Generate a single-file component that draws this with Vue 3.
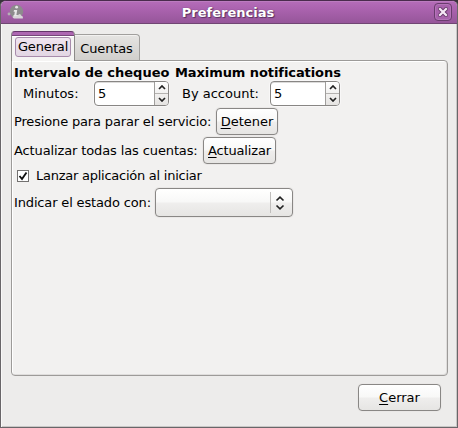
<script setup>
import { ref } from 'vue'

const minutes = ref(5)
const perAccount = ref(5)
const launch = ref(true)
</script>

<template>
  <div class="screen">
    <div class="window">
      <header class="titlebar">
        <svg class="app-icon" width="18" height="18" viewBox="0 0 18 18">
          <circle cx="9.500" cy="7.500" r="6.700" fill="#8d8b8d" />
          <circle cx="2" cy="10" r="1.400" fill="#b5b1b5" />
          <path d="M7 6h3.200l-.8 5h2v2H6.500v-2h.8l.5-3.300H6.600z" fill="#e8e7e8" />
          <circle cx="9.600" cy="3.200" r="1.400" fill="#e8e7e8" />
          <path d="M5.500 12.500l4-.5 3-2q1.500 0 1.500 1.500q2.500.5 1.800 3H7q-1.500-.5-1.500-2z" fill="#d8d5d8" />
        </svg>
        <h1 class="title">Preferencias</h1>
        <button class="close" aria-label="Cerrar ventana">
          <svg width="10" height="10" viewBox="0 0 10 10">
            <path d="M2 2l6 6M8 2l-6 6" stroke="#6a3a6d" stroke-width="4" stroke-linecap="square" />
            <path d="M2 2l6 6M8 2l-6 6" stroke="#f5e8f6" stroke-width="2.200" stroke-linecap="square" />
          </svg>
        </button>
      </header>

      <nav class="tabs">
        <button class="tab active"><span class="focus"><span class="t general">General</span></span></button>
        <button class="tab"><span class="t cuentas">Cuentas</span></button>
      </nav>

      <main class="panel">
        <div class="row heads">
          <b class="head h1">Intervalo de chequeo</b>
          <b class="head h2">Maximum notifications</b>
        </div>
        <div class="row spins">
          <span class="t minutos">Minutos:</span>
          <div class="spin first">
            <span class="value">{{ minutes }}</span>
            <div class="steps">
              <span class="step"><svg width="8" height="5" viewBox="0 0 8 5"><path d="M1 4l3-3 3 3" /></svg></span>
              <span class="step down"><svg width="8" height="5" viewBox="0 0 8 5"><path d="M1 1l3 3 3-3" /></svg></span>
            </div>
          </div>
          <span class="t account">By account:</span>
          <div class="spin second">
            <span class="value">{{ perAccount }}</span>
            <div class="steps">
              <span class="step"><svg width="8" height="5" viewBox="0 0 8 5"><path d="M1 4l3-3 3 3" /></svg></span>
              <span class="step down"><svg width="8" height="5" viewBox="0 0 8 5"><path d="M1 1l3 3 3-3" /></svg></span>
            </div>
          </div>
        </div>
        <div class="row stop">
          <span class="t presione">Presione para parar el servicio:</span>
          <button class="btn detener"><span class="t"><u>D</u>etener</span></button>
        </div>
        <div class="row update">
          <span class="t todas">Actualizar todas las cuentas:</span>
          <button class="btn actualizar"><span class="t"><u>A</u>ctualizar</span></button>
        </div>
        <div class="row check" @click="launch = !launch">
          <span class="box">
            <svg v-if="launch" width="10" height="10" viewBox="0 0 10 10"><path d="M1.500 5l2.500 3L8.500 1.500" /></svg>
          </span>
          <span class="t lanzar">Lanzar aplicación al iniciar</span>
        </div>
        <div class="row state">
          <span class="t indicar">Indicar el estado con:</span>
          <div class="combo">
            <span class="arrows">
              <svg width="10" height="14" viewBox="0 0 10 14"><path d="M1.500 4.500L5 1.200l3.500 3.300M1.500 9.500L5 12.800l3.500-3.300" /></svg>
            </span>
          </div>
        </div>
      </main>

      <footer class="footer">
        <button class="btn cerrar"><span class="t"><u>C</u>errar</span></button>
      </footer>
    </div>
  </div>
</template>

<style>
body { margin: 0; }
</style>

<style scoped>
* { box-sizing: border-box; }
button { font: inherit; color: inherit; padding: 0; margin: 0; }
.screen { width: 458px; height: 428px; background: #38333a; font: 13px/16px "DejaVu Sans", sans-serif; color: #000; overflow: hidden; }
.window {
  width: 458px; height: 428px; display: flex; flex-direction: column; overflow: hidden;
  border: 1px solid #696669; border-top-color: #4a2b4d; border-radius: 6px 6px 0 0; background: #edeceb;
  box-shadow: inset 1px 0 #f9f8f8, inset -1px -1px #c9c7c6;
}
.titlebar {
  height: 23px; flex: none; display: flex; align-items: center; padding: 0 5px 0 6px;
  background: linear-gradient(#b56db9, #ab63af 35%, #96569a);
  border-bottom: 1px solid #704673; box-shadow: inset 0 1px #bc7cc0;
}
.app-icon { flex: none; margin-top: 1px; }
.title {
  flex: 1; margin: 1px 3px 0 0; text-align: center; font-size: 13px; line-height: 16px; color: #fff;
  text-shadow: 1px 1px 1px #593160, 0 0 1px #593160; white-space: nowrap;
}
.close {
  width: 18px; height: 18px; display: flex; align-items: center; justify-content: center;
  border: 1px solid #693c6d; border-radius: 4px; background: #a862ac; box-shadow: inset 0 0 0 1px #b574b9;
}
.tabs { height: 36px; flex: none; display: flex; align-items: flex-end; padding-left: 10px; }
.tab {
  width: 65px; height: 26px; border: 1px solid #a19f9d; border-left: 0; border-bottom: 0;
  border-radius: 0 4px 0 0; background: linear-gradient(#e5e4e2, #d1cfcc); box-shadow: inset 0 1px #f2f1f0;
  display: flex; justify-content: center; align-items: center; padding-top: 3px;
}
.tab.active {
  width: 64px; height: 30px; margin-bottom: -1px; position: relative; z-index: 1; align-items: flex-start;
  border: 1px solid #8c8a88; border-top-color: #65346a; border-bottom: 0; border-radius: 4px 4px 0 0;
  background: linear-gradient(#ae67b2 0 3px, #764779 3px 4px, #fff 4px 5px, #f5f4f3 5px);
  padding-top: 5px; box-shadow: none;
}
.focus {
  width: 56px; height: 20px; display: flex; justify-content: center; align-items: center;
  border: 1px solid #a78bab; border-radius: 3px; background: linear-gradient(#f0e4f0, #e2d6e3);
}
.general { letter-spacing: -0.15px; }
.cuentas { letter-spacing: -0.15px; margin-right: 1px; }
.panel {
  width: 437px; height: 316px; flex: none; margin-left: 10px; padding-left: 2px;
  border: 1px solid #9d9b99; border-radius: 0 4px 4px 4px; background: #f2f1f0;
  box-shadow: inset 1px 1px #fff, inset -1px -1px #dfdddc;
}
.row { display: flex; align-items: center; }
.t, .head { white-space: nowrap; }
.head { flex: none; }
.heads { height: 20px; padding-top: 3px; }
.h1 { width: 161px; }
.h2 { letter-spacing: -0.08px; }
.spins { height: 26px; }
.minutos { width: 80px; padding-left: 9px; }
.account { width: 101px; padding-left: 13px; }
.spin {
  align-self: flex-start;
  width: 75px; height: 25px; display: flex; border: 1px solid #888684; border-radius: 4px;
  background: #fff; box-shadow: 0 0 0 1px #f8f7f7, inset 0 1px #dcdbda; overflow: hidden;
}
.second { width: 70px; }
.value { flex: 1; padding: 4px 0 0 3px; }
.steps { width: 14px; border-left: 1px solid #a09e9c; display: flex; flex-direction: column; background: linear-gradient(#fff, #e5e3e1); }
.step { flex: 1; display: flex; align-items: center; justify-content: center; }
.down { border-top: 1px solid #b4b2b0; }
svg { display: block; }
.step path, .arrows path { fill: none; stroke: #222; stroke-width: 1.700; }
.stop { height: 27px; margin-top: 1px; }
.update { height: 27px; margin-top: 2px; }
.presione { width: 202px; letter-spacing: -0.16px; }
.todas { width: 189px; letter-spacing: -0.12px; }
.btn {
  height: 27px; display: flex; justify-content: center; align-items: center; border: 1px solid #898785;
  border-radius: 4px; background: linear-gradient(#fff, #f8f8f7 48%, #efeeed 52%, #e6e5e3);
  box-shadow: 0 0 0 1px #eae8e7;
}
.detener { width: 62px; }
.actualizar { width: 73px; }
.actualizar .t { letter-spacing: -0.15px; }
.cerrar { width: 83px; }
u { text-decoration-thickness: 1px; text-underline-offset: 2px; }
.check { height: 24px; padding-left: 3px; gap: 7px; }
.lanzar { letter-spacing: -0.25px; }
.box { width: 12px; height: 12px; border: 1px solid #737170; background: #fff; }
.box path { fill: none; stroke: #111; stroke-width: 1.900; }
.indicar { width: 141px; letter-spacing: -0.15px; }
.combo {
  width: 138px; height: 29px; display: flex; justify-content: flex-end; align-items: center;
  border: 1px solid #898785; border-radius: 4px;
  background: linear-gradient(#fff, #f8f8f7 48%, #efeeed 52%, #e6e5e3); box-shadow: 0 0 0 1px #eae8e7;
}
.arrows { width: 22px; height: 21px; border-left: 1px solid #c0bebc; display: flex; align-items: center; padding-left: 4px; }
.footer { display: flex; justify-content: flex-end; padding: 8px 16px 0 0; }
</style>
